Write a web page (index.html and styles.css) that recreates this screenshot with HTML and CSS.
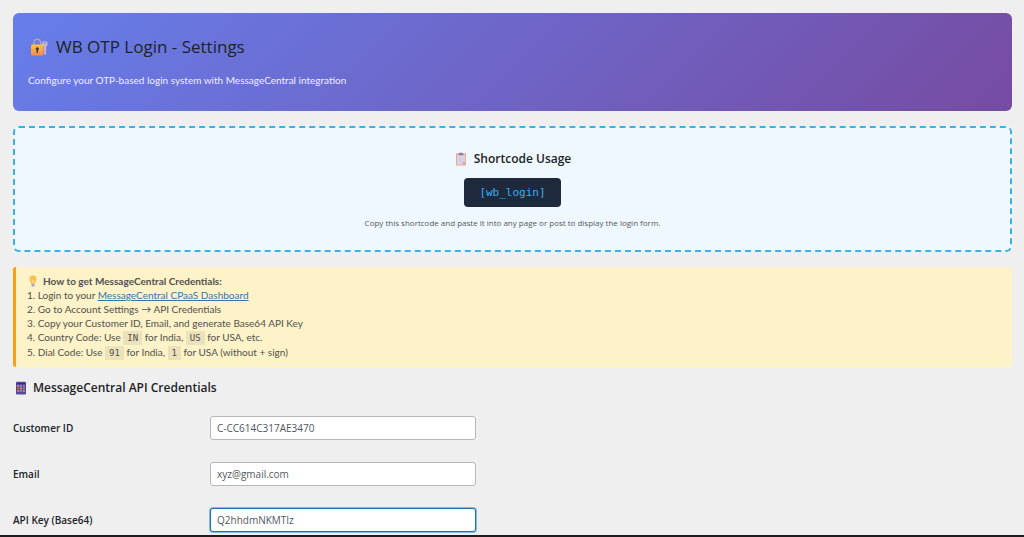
FILE: index.html
```html
<!DOCTYPE html>
<html lang="en">
<head>
<meta charset="utf-8">
<meta name="viewport" content="width=device-width, initial-scale=1">
<title>WB OTP Login - Settings</title>
<link rel="stylesheet" href="styles.css">
</head>
<body>
<main class="page">
  <header class="hero">
    <h1 class="hero-title">
      <svg class="icon-lock" viewBox="0 0 18 18" aria-hidden="true">
        <defs><linearGradient id="gold" x1="0" y1="0" x2="0" y2="1"><stop offset="0" stop-color="#ffc33a"/><stop offset="1" stop-color="#fb8b4c"/></linearGradient></defs>
        <path d="M4 8V4.500a3.300 3.300 0 0 1 6.600 0V8" fill="none" stroke="#aaa3b4" stroke-width="1.500"/>
        <path d="M14 6v10l1 1 1.200-1v-1.500l-.7-.7.7-.8V6z" fill="#c6b4d8"/>
        <circle cx="14.800" cy="5.800" r="2.900" fill="#c6b4d8"/>
        <circle cx="14.800" cy="4.800" r=".8" fill="#7568b4"/>
        <rect x="1" y="6.500" width="12.500" height="11" rx="1.500" fill="url(#gold)"/>
        <circle cx="7.300" cy="10.800" r="1.600" fill="#443345"/>
        <path d="M6.600 11h1.400v4H6.600z" fill="#443345"/>
      </svg>
      WB OTP Login - Settings
    </h1>
    <p class="hero-text">Configure your OTP-based login system with MessageCentral integration</p>
  </header>

  <section class="shortcode">
    <h2 class="section-title">
      <svg class="icon" viewBox="0 0 14 14" aria-hidden="true">
        <rect x="2" y="1.300" width="10" height="12.200" rx=".8" fill="#e6a98c"/>
        <path d="M3 2.500h8v7.300L8.600 12.500H3z" fill="#ddd5e9"/>
        <path d="M11 9.800H8.600v2.700z" fill="#b7a5c8"/>
        <path d="M4.500 3.300V1.600h1.300a1.200 1.200 0 0 1 2.400 0h1.300v1.700z" fill="#8b7894"/>
        <path d="M4.500 5.500h5M4.500 7.300h5M4.500 9h3.500" stroke="#c7bdd6" stroke-width=".6"/>
      </svg>
      Shortcode Usage
    </h2>
    <code class="shortcode-tag">[wb_login]</code>
    <p class="shortcode-text">Copy this shortcode and paste it into any page or post to display the login form.</p>
  </section>

  <section class="note">
    <strong class="note-title">
      <svg class="icon-bulb" viewBox="0 0 12 12" aria-hidden="true">
        <path d="M6 .5a3.600 3.600 0 0 0-3.600 3.700C2.400 6 4 6.700 4.200 8.500h3.600C8 6.700 9.600 6 9.600 4.200A3.600 3.600 0 0 0 6 .5z" fill="#fbc34a"/>
        <path d="M5 5l1 1 1-1M6 6v2.500" stroke="#fff0a8" stroke-width=".7" fill="none"/>
        <path d="M4.400 8.500h3.200v2L7 11.500H5l-.6-1z" fill="#baa3b5"/>
      </svg>
      How to get MessageCentral Credentials:
    </strong>
    <ol class="steps">
      <li>Login to your <a class="link" href="#dashboard">MessageCentral CPaaS Dashboard</a></li>
      <li>Go to Account Settings → API Credentials</li>
      <li>Copy your Customer ID, Email, and generate Base64 API Key</li>
      <li>Country Code: Use <code class="chip">IN</code> for India, <code class="chip">US</code> for USA, etc.</li>
      <li>Dial Code: Use <code class="chip">91</code> for India, <code class="chip">1</code> for USA (without + sign)</li>
    </ol>
  </section>

  <form class="credentials">
    <h2 class="section-title">
      <svg class="icon" viewBox="0 0 14 14" aria-hidden="true">
        <rect x="3" y=".8" width="10" height="12.800" rx="1" fill="#59479b"/>
        <path d="M4 2h8v1H4z" fill="#373255"/>
        <path d="M4.200 4h2v1.700h-2zM7 6.500h2v1.700H7zM4.200 9h2v1.700h-2zM9.800 9h2v1.700h-2z" fill="#e58a62"/>
        <path d="M7 4h2v1.700H7zM9.800 6.500h2v1.700h-2zM7 9h2v1.700H7z" fill="#63a2d4"/>
        <path d="M9.800 4h2v1.700h-2zM4.200 6.500h2v1.700h-2z" fill="#d1656d"/>
      </svg>
      MessageCentral API Credentials
    </h2>
    <div class="field">
      <label class="label" for="customer">Customer ID</label>
      <input class="input" id="customer" type="text" value="C-CC614C317AE3470">
    </div>
    <div class="field">
      <label class="label" for="email">Email</label>
      <input class="input" id="email" type="email" value="xyz@gmail.com">
    </div>
    <div class="field">
      <label class="label" for="key">API Key (Base64)</label>
      <input class="input input-active" id="key" type="text" value="Q2hhdmNKMTIz">
    </div>
  </form>
</main>
<footer class="edge"></footer>
</body>
</html>
```
FILE: styles.css
```css
* { box-sizing: border-box; }
html { height: 100%; }
body {
  display: flex;
  flex-direction: column;
  min-height: 100%;
  margin: 0;
  background: #efefef;
  color: #1d2327;
  font: 10px/14px "Segoe UI", "Open Sans", "Noto Sans", sans-serif;
}
h1, h2, p { margin: 0; }
.page {
  display: flex;
  flex: 1;
  flex-direction: column;
  gap: 15px;
  padding: 13px 12px 3px 13px;
}
.hero {
  padding: 22px 15px 24px;
  border-radius: 6px;
  background: linear-gradient(135deg, #667eea 0%, #764ba2 100%);
}
.hero-title {
  display: flex;
  align-items: center;
  gap: 8px;
  padding-left: 2px;
  font-size: 17px;
  font-weight: 400;
  line-height: 24px;
}
.icon-lock { width: 18px; height: 18px; }
.hero-text { margin-top: 14px; color: #f0eefb; font-family: "Segoe UI", Lato, sans-serif; }
.shortcode {
  display: flex;
  flex-direction: column;
  align-items: center;
  padding: 23px 22px 20px;
  border: 2px dashed #38b2e8;
  border-radius: 6px;
  background: #f0f8ff;
}
.section-title {
  display: flex;
  align-items: center;
  gap: 6px;
  font-size: 12px;
  font-weight: 600;
  line-height: 16px;
}
.icon { width: 14px; height: 14px; }
.shortcode-tag {
  margin-top: 11px;
  padding: 6px 15px;
  border-radius: 4px;
  background: #1e293b;
  color: #38b0f4;
  font: 11px/17px Consolas, "DejaVu Sans Mono", monospace;
}
.shortcode-text { margin-top: 9px; color: #50575e; font-size: 8px; line-height: 14px; }
.note {
  padding: 7px 11px;
  border-left: 3px solid #ff9f0a;
  border-radius: 3px;
  background: #fdf2c8;
  color: #50514d;
  font-family: "Segoe UI", Lato, sans-serif;
}
.note-title { display: flex; align-items: center; gap: 4px; font-weight: 700; }
.icon-bulb { width: 12px; height: 12px; }
.steps { margin: 0; padding: 0; list-style-type: none; counter-reset: step; }
.steps li { counter-increment: step; }
.steps li::before { content: counter(step) ". "; }
.link { color: #2f78ae; }
.chip {
  padding: 2px 4px;
  background: #ebe1bb;
  font: 9px/14px Consolas, "DejaVu Sans Mono", monospace;
}
.credentials { display: flex; flex-direction: column; gap: 22px; }
.credentials .section-title { margin: -2px 0; }
.field { display: grid; grid-template-columns: 197px 266px; align-items: center; }
.label { font-weight: 600; }
.input {
  width: 100%;
  height: 24px;
  padding: 0 6px;
  border: 1px solid #b5b7ba;
  border-radius: 3px;
  background: #fff;
  color: #50575e;
  font: inherit;
  line-height: 16px;
}
.input-active, .input:focus { border-color: #2271b1; outline: 0; box-shadow: 0 0 0 1px #8ab6da; }
.edge { height: 2px; background: #1d1d20; }
```
